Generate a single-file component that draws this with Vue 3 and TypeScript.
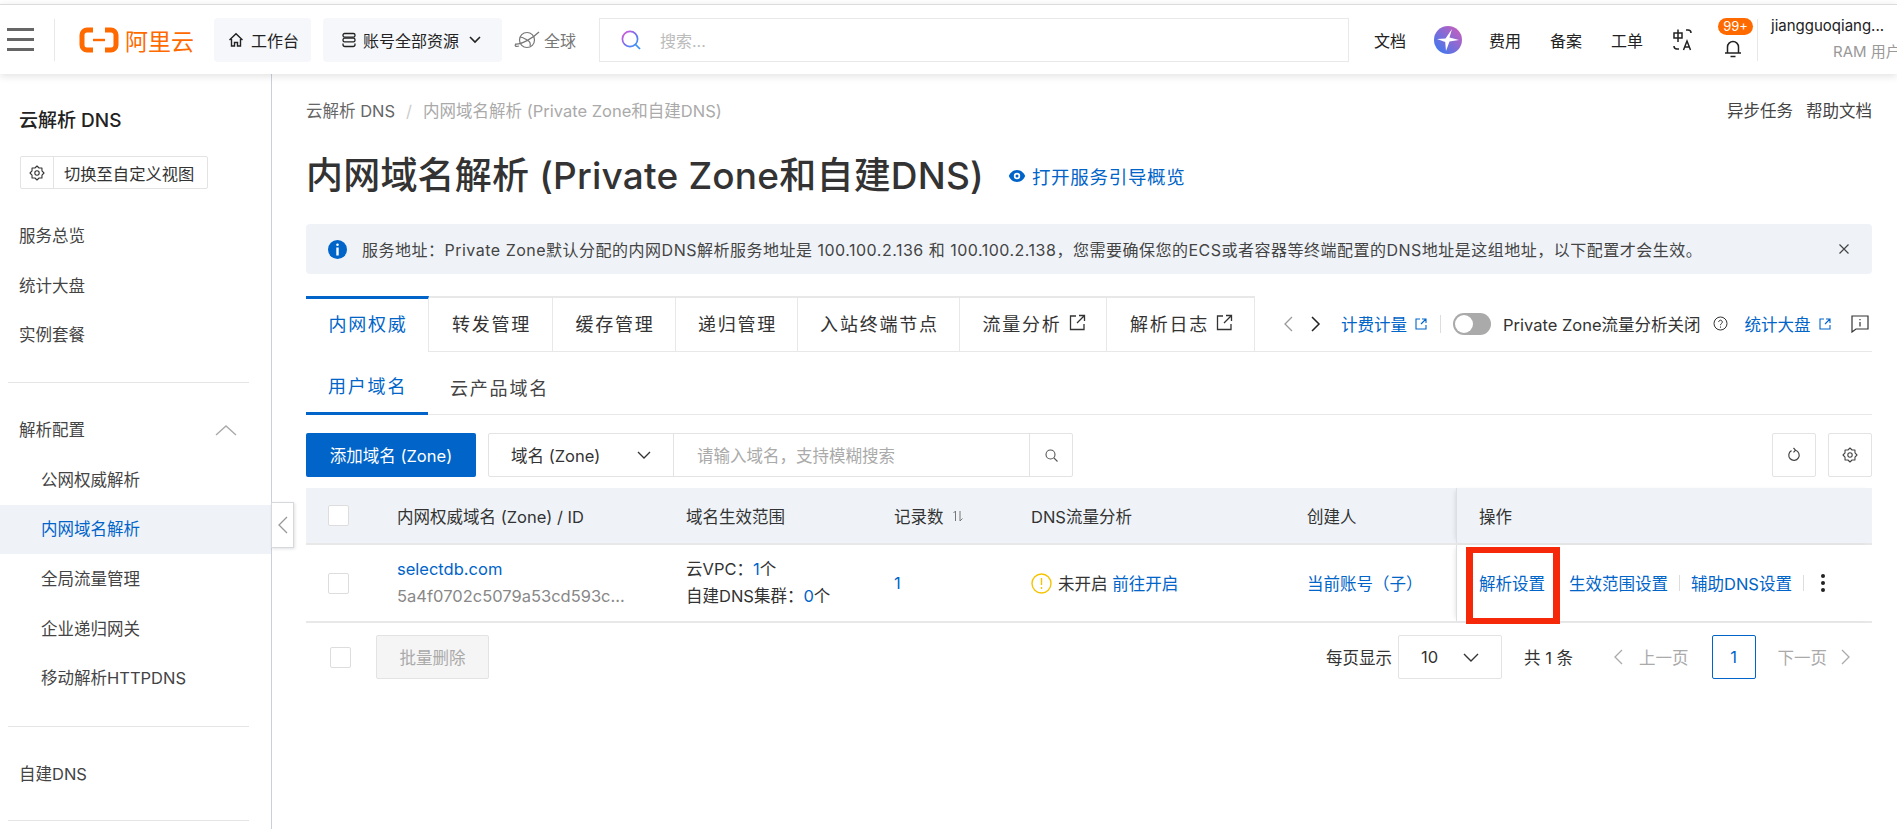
<script setup lang="ts">
interface TabItem {
  label: string
  width: number
  external?: boolean
}

const topLinks = ['费用', '备案', '工单']

const navTop = ['服务总览', '统计大盘', '实例套餐']
const navSub = ['公网权威解析', '内网域名解析', '全局流量管理', '企业递归网关', '移动解析HTTPDNS']

const tabs: TabItem[] = [
  { label: '内网权威', width: 123 },
  { label: '转发管理', width: 124 },
  { label: '缓存管理', width: 123 },
  { label: '递归管理', width: 122 },
  { label: '入站终端节点', width: 162 },
  { label: '流量分析', width: 147, external: true },
  { label: '解析日志', width: 148, external: true },
]

const columns = ['内网权威域名 (Zone) / ID', '域名生效范围', '记录数', 'DNS流量分析', '创建人']

// 8 tooth gear outline on a 16 box
function gearPath(): string {
  const pts: string[] = []
  const n = 8
  for (let i = 0; i < n * 2; i++) {
    const r = i % 2 === 0 ? 7 : 5.4
    const a = (Math.PI * i) / n
    pts.push(`${(8 + r * Math.sin(a)).toFixed(2)} ${(8 - r * Math.cos(a)).toFixed(2)}`)
  }
  return 'M' + pts.join('L') + 'Z'
}
const gear = gearPath()
</script>

<template>
  <div class="page">
    <header class="topbar">
      <div class="burger"><i></i><i></i><i></i></div>
      <div class="logo">
        <svg width="40" height="26" viewBox="0 0 40 26">
          <path d="M14 3H8a5 5 0 0 0-5 5v10a5 5 0 0 0 5 5h6M26 3h6a5 5 0 0 1 5 5v10a5 5 0 0 1-5 5h-6" fill="none" stroke="#ff6a00" stroke-width="5"/>
          <path d="M14 13h12" stroke="#ff6a00" stroke-width="2.4"/>
        </svg>
        <span>阿里云</span>
      </div>
      <div class="pill pill-home">
        <svg width="16" height="16" viewBox="0 0 16 16" fill="none" stroke="#222" stroke-width="1.4"><path d="M1.5 8 8 1.8 14.5 8M3.500 7v7h3v-3.500h3V14h3V7"/></svg>
        工作台
      </div>
      <div class="pill pill-res">
        <svg width="16" height="16" viewBox="0 0 16 16" fill="none" stroke="#222" stroke-width="1.3"><rect x="2" y="1.500" width="12" height="3.600" rx="1.600"/><rect x="2" y="6.200" width="12" height="3.600" rx="1.600"/><path d="M2 11.500v1a2 2 0 0 0 2 2h8a2 2 0 0 0 2-2v-1"/></svg>
        账号全部资源
        <svg class="res-arrow" width="12" height="8" viewBox="0 0 12 8" fill="none" stroke="#222" stroke-width="1.600"><path d="m1 1 5 5 5-5"/></svg>
      </div>
      <div class="region">
        <svg width="28" height="22" viewBox="0 0 28 22" fill="none" stroke="#777" stroke-width="1.200"><circle cx="14" cy="11" r="7.500"/><path d="M2 15c6 1 18-6 24-12M7 8c3 0 5 2 7 3s4 3 3 6M3 15c-2 2 0 3 3 2"/></svg>
        全球
      </div>
      <div class="search">
        <svg width="22" height="22" viewBox="0 0 22 22" fill="none" stroke-width="1.700">
          <defs>
            <linearGradient id="sg" x1="0" y1="0" x2="1" y2="1">
              <stop offset="0" stop-color="#e05ad0"/>
              <stop offset="0.5" stop-color="#7a6cf0"/>
              <stop offset="1" stop-color="#2f9bf5"/>
            </linearGradient>
          </defs>
          <circle cx="10" cy="10" r="7.600" stroke="url(#sg)"/>
          <path d="m15.500 15.500 4.500 4.500" stroke="#3a8ff5"/>
        </svg>
        <span>搜索...</span>
      </div>
      <a class="top-link first">文档</a>
      <div class="star">
        <svg width="28" height="28" viewBox="0 0 28 28">
          <defs>
            <linearGradient id="stg" x1="0" y1="1" x2="1" y2="0">
              <stop offset="0" stop-color="#2f7bf5"/>
              <stop offset="1" stop-color="#d45cb8"/>
            </linearGradient>
          </defs>
          <circle cx="14" cy="14" r="14" fill="url(#stg)"/>
          <path d="M18 3 15.500 11.500 25 14l-9.500 1.500L12 25l-.8-9L3 13l8.500-.5z" fill="#fff"/>
        </svg>
      </div>
      <a v-for="l in topLinks" :key="l" class="top-link">{{ l }}</a>
      <svg class="lang" width="22" height="24" viewBox="0 0 22 24" fill="none" stroke="#222" stroke-width="1.500">
        <path d="M2 5h8v5H2zM6 1.500V14M14 2h2a3 3 0 0 1 3 3M2 18a3 3 0 0 0 3 3h2"/>
        <path d="m11.500 22 3.500-9 3.500 9M12.800 19h4.400"/>
      </svg>
      <div class="bell">
        <svg width="20" height="20" viewBox="0 0 20 20" fill="none" stroke="#222" stroke-width="1.500"><path d="M2 15h16M4.500 15V9a5.500 5.500 0 0 1 11 0v6M7.500 18.500h5"/></svg>
        <span class="badge">99+</span>
      </div>
      <div class="user">
        <div class="user-name">jiangguoqiang...</div>
        <div class="user-role">RAM 用户</div>
      </div>
    </header>

    <div class="body">
      <aside class="side">
        <div class="side-title">云解析 DNS</div>
        <div class="view-btn">
          <span class="view-icon">
            <svg width="16" height="16" viewBox="0 0 16 16" fill="none" stroke="#333" stroke-width="1.100"><path :d="gear" stroke-linejoin="round"/><circle cx="8" cy="8" r="2.200"/></svg>
          </span>
          <span class="view-text">切换至自定义视图</span>
        </div>
        <div class="nav-group first">
          <div v-for="n in navTop" :key="n" class="nav-item">{{ n }}</div>
        </div>
        <div class="side-line"></div>
        <div class="nav-group">
          <div class="nav-item nav-head">
            解析配置
            <svg width="22" height="12" viewBox="0 0 22 12" fill="none" stroke="#aaa" stroke-width="1.400"><path d="m1 11 10-9 10 9"/></svg>
          </div>
          <div v-for="n in navSub" :key="n" class="nav-item nav-sub" :class="{ active: n === '内网域名解析' }">{{ n }}</div>
        </div>
        <div class="side-line low"></div>
        <div class="nav-group">
          <div class="nav-item">自建DNS</div>
        </div>
        <div class="side-line"></div>
        <div class="collapse">
          <svg width="10" height="18" viewBox="0 0 10 18" fill="none" stroke="#999" stroke-width="1.300"><path d="M9 1 1 9l8 8"/></svg>
        </div>
      </aside>

      <main class="main">
        <div class="crumb-row">
          <div class="crumbs">
            <span class="crumb-a">云解析 DNS</span>
            <span class="crumb-sep">/</span>
            <span class="crumb-b">内网域名解析 (Private Zone和自建DNS)</span>
          </div>
          <div class="crumb-right"><span>异步任务</span><span>帮助文档</span></div>
        </div>

        <div class="title-row">
          <h1>内网域名解析 (Private Zone和自建DNS)</h1>
          <a class="guide">
            <svg width="18" height="14" viewBox="0 0 18 14"><path d="M9 1C5 1 2 4 .8 7 2 10 5 13 9 13s7-3 8.200-6C16 4 13 1 9 1z" fill="#0064c8"/><circle cx="9" cy="7" r="3.200" fill="#fff"/><circle cx="9" cy="7" r="1.500" fill="#0064c8"/></svg>
            打开服务引导概览
          </a>
        </div>

        <div class="alert">
          <svg width="19" height="19" viewBox="0 0 19 19"><circle cx="9.500" cy="9.500" r="9.500" fill="#0064c8"/><rect x="8.200" y="3.500" width="2.600" height="2.600" rx="1.300" fill="#fff"/><rect x="8.300" y="7.500" width="2.400" height="8" fill="#fff"/></svg>
          <span class="alert-text">服务地址：Private Zone默认分配的内网DNS解析服务地址是 100.100.2.136 和 100.100.2.138，您需要确保您的ECS或者容器等终端配置的DNS地址是这组地址，以下配置才会生效。</span>
          <svg class="alert-x" width="12" height="12" viewBox="0 0 12 12" stroke="#444" stroke-width="1.200"><path d="m1.500 1.500 9 9M10.500 1.500l-9 9"/></svg>
        </div>

        <div class="tabbar">
          <div
            v-for="(t, i) in tabs"
            :key="t.label"
            class="tab"
            :class="{ on: i === 0 }"
            :style="{ width: t.width + 'px' }"
          >
            {{ t.label }}
            <svg v-if="t.external" width="17" height="17" viewBox="0 0 17 17" fill="none" stroke="#333" stroke-width="1.300"><path d="M7 2H1.500v13.500H15V10M10 1.500h5.500V7M15.500 1.500 8 9"/></svg>
          </div>
          <div class="tab-tools">
            <svg class="arrow" width="10" height="16" viewBox="0 0 10 16" fill="none" stroke="#999" stroke-width="1.300"><path d="M9 1 2 8l7 7"/></svg>
            <svg class="arrow next" width="10" height="16" viewBox="0 0 10 16" fill="none" stroke="#222" stroke-width="1.500"><path d="m1 1 7 7-7 7"/></svg>
            <a class="tool-link">计费计量
              <svg width="12" height="12" viewBox="0 0 12 12" fill="none" stroke="#0064c8" stroke-width="1.100"><path d="M5 1H1v10h10V7M7 1h4v4M11 1 6 6"/></svg>
            </a>
            <i class="tool-sep"></i>
            <span class="switch"><b></b></span>
            <span class="switch-text">Private Zone流量分析关闭</span>
            <svg class="help" width="15" height="15" viewBox="0 0 15 15" fill="none" stroke="#333" stroke-width="1"><circle cx="7.500" cy="7.500" r="6.500"/><path d="M5.700 6a1.800 1.800 0 1 1 2.800 1.500c-.7.500-1 .8-1 1.700M7.500 10.500v1.200"/></svg>
            <a class="tool-link stat">统计大盘
              <svg width="12" height="12" viewBox="0 0 12 12" fill="none" stroke="#0064c8" stroke-width="1.100"><path d="M5 1H1v10h10V7M7 1h4v4M11 1 6 6"/></svg>
            </a>
            <svg class="feedback" width="18" height="18" viewBox="0 0 18 18" fill="none" stroke="#333" stroke-width="1.200"><path d="M1 1h16v13H5l-4 3zM9 4v1.300M9 7v4.500"/></svg>
          </div>
        </div>

        <div class="subtabs">
          <div class="subtab on">用户域名</div>
          <div class="subtab">云产品域名</div>
        </div>

        <div class="toolbar">
          <button class="btn-add">添加域名 (Zone)</button>
          <div class="filter">
            <div class="filter-type">
              域名 (Zone)
              <svg width="14" height="8" viewBox="0 0 14 8" fill="none" stroke="#333" stroke-width="1.300"><path d="m1 1 6 6 6-6"/></svg>
            </div>
            <div class="filter-input">请输入域名，支持模糊搜索</div>
            <div class="filter-go">
              <svg width="13" height="13" viewBox="0 0 13 13" fill="none" stroke="#555" stroke-width="1.100"><circle cx="5.500" cy="5.500" r="4.500"/><path d="m9 9 3.500 3.500"/></svg>
            </div>
          </div>
          <div class="tool-btn push">
            <svg width="16" height="16" viewBox="0 0 16 16" fill="none" stroke="#444" stroke-width="1.200"><path d="M9.500 3.200A5.200 5.200 0 1 1 5.500 3.600M7.500 1l2 2.200-2 2.200"/></svg>
          </div>
          <div class="tool-btn">
            <svg width="16" height="16" viewBox="0 0 16 16" fill="none" stroke="#444" stroke-width="1.100"><path :d="gear" stroke-linejoin="round"/><circle cx="8" cy="8" r="2.200"/></svg>
          </div>
        </div>

        <div class="table">
          <div class="grid head">
            <div class="cell"><span class="check"></span></div>
            <div v-for="c in columns" :key="c" class="cell">
              {{ c }}
              <svg v-if="c === '记录数'" class="sort" width="12" height="12" viewBox="0 0 12 12" fill="none" stroke="#777" stroke-width="1"><path d="M3.500 11V1L1.500 3M8 1v10l2.500-2.500"/></svg>
            </div>
            <div class="cell ops-cell">操作</div>
          </div>
          <div class="grid row">
            <div class="cell"><span class="check"></span></div>
            <div class="cell stack">
              <a class="link">selectdb.com</a>
              <span class="zone-id">5a4f0702c5079a53cd593c...</span>
            </div>
            <div class="cell stack">
              <span>云VPC：<a class="link">1</a>个</span>
              <span>自建DNS集群：<a class="link">0</a>个</span>
            </div>
            <div class="cell"><a class="link">1</a></div>
            <div class="cell">
              <svg class="warn" width="21" height="21" viewBox="0 0 21 21" fill="none" stroke="#f5c400" stroke-width="1.400"><circle cx="10.500" cy="10.500" r="9.500"/><path d="M10.500 5v7M10.500 14v2"/></svg>
              未开启&nbsp;<a class="link">前往开启</a>
            </div>
            <div class="cell"><a class="link">当前账号（子）</a></div>
            <div class="cell ops-cell">
              <a class="link">解析设置</a>
              <a class="link op-2">生效范围设置</a>
              <i class="op-sep"></i>
              <a class="link">辅助DNS设置</a>
              <i class="op-sep"></i>
              <span class="dots"><i></i><i></i><i></i></span>
              <span class="red-box"></span>
            </div>
          </div>
        </div>

        <div class="footer">
          <span class="check"></span>
          <button class="btn-batch">批量删除</button>
          <span class="per">每页显示</span>
          <div class="size-select">
            10
            <svg width="16" height="9" viewBox="0 0 16 9" fill="none" stroke="#333" stroke-width="1.400"><path d="m1 1 7 7 7-7"/></svg>
          </div>
          <span class="total">共 1 条</span>
          <svg class="pg-arrow" width="10" height="16" viewBox="0 0 10 16" fill="none" stroke="#aaa" stroke-width="1.300"><path d="M9 1 2 8l7 7"/></svg>
          <span class="pg-off prev">上一页</span>
          <span class="pg-num">1</span>
          <span class="pg-off next">下一页</span>
          <svg class="pg-arrow end" width="10" height="16" viewBox="0 0 10 16" fill="none" stroke="#aaa" stroke-width="1.300"><path d="m1 1 7 7-7 7"/></svg>
        </div>
      </main>
    </div>
  </div>
</template>

<style scoped>
.page {
  height: 829px;
  overflow: hidden;
  display: flex;
  flex-direction: column;
  background: #fff;
  color: #333;
  font-family: Inter, "Noto Sans CJK SC", sans-serif;
  font-size: 16.500px;
  padding-top: 4px;
  box-sizing: border-box;
}
a { color: inherit; text-decoration: none; }

/* top bar */
.topbar {
  height: 69px;
  flex: none;
  display: flex;
  align-items: center;
  border-top: 1px solid #dcdcdc;
  box-shadow: 0 2px 8px rgba(0,0,0,0.12);
  position: relative;
  z-index: 2;
  background: #fff;
  white-space: nowrap;
  overflow: hidden;
}
.topbar > * { flex: none; }
.burger {
  width: 27px;
  margin-left: 7px;
  display: flex;
  flex-direction: column;
  gap: 7px;
}
.burger i { height: 3px; background: #666; }
.logo {
  margin-left: 20px;
  padding-left: 24px;
  box-sizing: border-box;
  height: 42px;
  border-left: 1px solid #e8e8e8;
  display: flex;
  align-items: center;
  gap: 6px;
  color: #ff6a00;
  font-size: 23px;
  width: 160px;
}
.pill {
  height: 44px;
  background: #f5f7fa;
  border-radius: 4px;
  display: flex;
  align-items: center;
  font-size: 16px;
  color: #222;
  box-sizing: border-box;
}
.pill-home { width: 97px; padding-left: 14px; gap: 7px; }
.pill-res { width: 179px; margin-left: 12px; padding-left: 18px; gap: 6px; }
.res-arrow { margin-left: 4px; }
.region {
  margin-left: 11px;
  width: 86px;
  display: flex;
  align-items: center;
  gap: 3px;
  color: #777;
  font-size: 16px;
}
.search {
  width: 750px;
  height: 44px;
  box-sizing: border-box;
  border: 1px solid #e9e9e9;
  display: flex;
  align-items: center;
  padding-left: 20px;
  gap: 18px;
  color: #bbb;
  font-size: 16px;
}
.top-link { font-size: 16px; color: #222; width: 32px; margin-right: 29px; }
.top-link.first { margin-left: 25px; margin-right: 28px; }
.star { width: 28px; height: 28px; margin-right: 27px; }
.bell { position: relative; width: 20px; height: 20px; margin-left: 29px; margin-top: 16px; }
.badge {
  position: absolute;
  left: -5px;
  top: -20px;
  width: 35px;
  height: 17px;
  line-height: 17px;
  text-align: center;
  border-radius: 9px;
  background: #ff6a00;
  color: #fff;
  font-size: 13px;
}
.user {
  margin-left: 14px;
  height: 42px;
  border-left: 1px solid #e8e8e8;
  padding-left: 13px;
  width: 140px;
}
.user-name { font-size: 15px; color: #222; line-height: 20px; margin-top: -3px; }
.user-role { font-size: 15px; color: #999; margin-top: 6px; padding-left: 62px; line-height: 20px; }

.body { flex: 1; display: flex; min-height: 0; }

/* sidebar */
.side {
  width: 272px;
  flex: none;
  box-sizing: border-box;
  border-right: 1px solid #c8d0da;
  position: relative;
  padding-top: 36px;
}
.side-title { font-size: 19px; font-weight: 500; color: #222; padding-left: 19px; line-height: 22px; }
.view-btn {
  margin: 24px 0 0 20px;
  width: 188px;
  height: 33px;
  box-sizing: border-box;
  border: 1px solid #e3e3e3;
  border-radius: 2px;
  display: flex;
  align-items: center;
  font-size: 16.300px;
}
.view-icon {
  width: 32px;
  height: 100%;
  border-right: 1px solid #e3e3e3;
  display: flex;
  align-items: center;
  justify-content: center;
}
.view-text { padding-left: 10px; }
.nav-group { display: flex; flex-direction: column; }
.nav-group.first { margin-top: 23px; }
.nav-item {
  height: 49.500px;
  line-height: 49.500px;
  padding-left: 19px;
  font-size: 16.500px;
  color: #444;
}
.nav-head { display: flex; align-items: center; justify-content: space-between; padding-right: 34px; }
.nav-sub { padding-left: 41px; position: relative; top: 1px; }
.nav-sub.active { background: #eff3f8; color: #0064c8; top: 0; }
.side-line { margin: 21px 22px 23px 8px; height: 1px; background: #e5e5e5; }
.side-line.low { margin-top: 23px; }
.collapse {
  position: absolute;
  left: 271px;
  top: 428px;
  width: 23px;
  height: 46px;
  box-sizing: border-box;
  background: #fff;
  border: 1px solid #d5d9de;
  box-shadow: 1px 1px 3px rgba(0,0,0,0.12);
  display: flex;
  align-items: center;
  justify-content: center;
}

/* main column */
.main { flex: 1; min-width: 0; padding: 0 25px 0 34px; }
.crumb-row {
  display: flex;
  justify-content: space-between;
  align-items: center;
  height: 20px;
  margin-top: 26px;
}
.crumb-a { color: #666; }
.crumb-sep { color: #ccc; margin: 0 11px; }
.crumb-b { color: #aaa; }
.crumb-right { display: flex; gap: 13px; color: #444; }
.title-row { display: flex; align-items: center; margin-top: 32px; height: 48px; }
h1 { margin: 0; font-size: 37px; letter-spacing: 0.2px; font-weight: 500; color: #333; line-height: 48px; }
.guide {
  margin-left: 24px;
  display: flex;
  align-items: center;
  gap: 6px;
  color: #0064c8;
  font-size: 18.500px;
  letter-spacing: 0.7px;
}
.alert {
  margin-top: 24px;
  height: 50px;
  background: #eff3f8;
  border-radius: 4px;
  display: flex;
  align-items: center;
  padding-left: 22px;
}
.alert-text { margin-left: 15px; font-size: 16px; letter-spacing: 0.5px; color: #444; white-space: nowrap; }
.alert-x { margin-left: auto; margin-right: 22px; }

.tabbar {
  margin-top: 22px;
  height: 55px;
  display: flex;
  border-bottom: 1px solid #e8e8e8;
}
.tab {
  flex: none;
  box-sizing: border-box;
  height: 55px;
  padding: 0 0 4px 2px;
  border-top: 2px solid #e8e8e8;
  border-right: 1px solid #e8e8e8;
  display: flex;
  align-items: center;
  justify-content: center;
  gap: 7px;
  font-size: 18px;
  color: #333;
  letter-spacing: 1.800px;
  background: #fff;
}
.tab.on { color: #0064c8; border-top: 3px solid #0064c8; height: 56px; padding-bottom: 5px; position: relative; }
.tab-tools {
  flex: 1;
  min-width: 0;
  display: flex;
  align-items: center;
  padding-left: 28px;
  white-space: nowrap;
}
.tab-tools > * { flex: none; }
.arrow.next { margin-left: 18px; }
.tool-link { color: #0064c8; display: flex; align-items: center; gap: 8px; margin-left: 20px; }
.tool-sep { width: 1px; height: 18px; background: #ddd; margin-left: 13px; }
.switch {
  width: 38px;
  height: 22px;
  border-radius: 11px;
  background: #aaa;
  margin-left: 12px;
  position: relative;
}
.switch b {
  position: absolute;
  left: 2px;
  top: 2px;
  width: 18px;
  height: 18px;
  border-radius: 50%;
  background: #fff;
}
.switch-text { margin-left: 12px; color: #333; }
.help { margin-left: 12px; }
.tool-link.stat { margin-left: 17px; }
.feedback { margin-left: auto; margin-right: 3px; }

.subtabs {
  height: 63px;
  display: flex;
  border-bottom: 1px solid #e8e8e8;
  box-sizing: border-box;
}
.subtab {
  font-size: 18px;
  letter-spacing: 1.800px;
  padding: 6px 22px 0;
  display: flex;
  align-items: center;
  color: #444;
  height: 63px;
  box-sizing: border-box;
  white-space: nowrap;
}
.subtab.on { color: #0064c8; border-bottom: 3px solid #0064c8; width: 122px; padding-right: 0; }

.toolbar { margin-top: 18px; display: flex; gap: 12px; height: 44px; }
.btn-add {
  width: 170px;
  border: none;
  background: #0064c8;
  border-radius: 2px;
  color: #fff;
  font: inherit;
}
.filter {
  display: flex;
  width: 585px;
  border: 1px solid #e3e3e3;
  border-radius: 2px;
  box-sizing: border-box;
}
.filter-type {
  width: 185px;
  flex: none;
  box-sizing: border-box;
  padding: 0 22px;
  display: flex;
  align-items: center;
  justify-content: space-between;
  border-right: 1px solid #e3e3e3;
}
.filter-input { flex: 1; display: flex; align-items: center; padding-left: 23px; color: #aaa; }
.filter-go { width: 42px; border-left: 1px solid #e3e3e3; display: flex; align-items: center; justify-content: center; }
.tool-btn {
  width: 44px;
  box-sizing: border-box;
  border: 1px solid #e3e3e3;
  border-radius: 2px;
  display: flex;
  align-items: center;
  justify-content: center;
}
.tool-btn.push { margin-left: auto; }

/* table */
.table { margin-top: 11px; }
.grid {
  display: grid;
  grid-template-columns: 91px 289px 208px 137px 276px 149px 1fr;
  align-items: stretch;
  border-bottom: 2px solid #e8e8e8;
}
.head { height: 57px; background: #eff3f8; box-sizing: border-box; }
.row { height: 78px; box-sizing: border-box; }
.cell { display: flex; align-items: center; color: #333; white-space: nowrap; }
.cell .check { margin-left: 22px; }
.check {
  width: 21px;
  height: 21px;
  box-sizing: border-box;
  background: #fff;
  border: 1px solid #ddd;
  border-radius: 2px;
  flex: none;
}
.stack { flex-direction: column; align-items: flex-start; justify-content: center; gap: 6px; line-height: 21px; }
.link { color: #0064c8; }
.zone-id { color: #888; }
.sort { margin-left: 8px; }
.warn { margin-right: 6px; }
.ops-cell {
  padding-left: 22px;
  border-left: 1px solid #dcdfe4;
  box-shadow: -3px 0 5px -3px rgba(0,0,0,0.14);
  position: relative;
}
.op-2 { margin-left: 24px; }
.op-sep { width: 1px; height: 16px; background: #ddd; margin: 0 11px; }
.dots { display: flex; flex-direction: column; gap: 3px; margin-left: 6px; }
.dots i { width: 4px; height: 4px; border-radius: 50%; background: #222; }
.red-box {
  position: absolute;
  left: 9px;
  top: 2px;
  width: 94px;
  height: 77px;
  box-sizing: border-box;
  border: 6px solid #f5290a;
  border-left-width: 7px;
  border-right-width: 7px;
}

.footer { margin-top: 12px; display: flex; align-items: center; height: 44px; padding-left: 24px; }
.btn-batch {
  margin-left: 25px;
  width: 113px;
  height: 44px;
  background: #f5f5f5;
  border: 1px solid #e3e3e3;
  border-radius: 2px;
  color: #aaa;
  font: inherit;
}
.per { margin-left: auto; }
.size-select {
  margin-left: 6px;
  width: 104px;
  height: 44px;
  box-sizing: border-box;
  border: 1px solid #e3e3e3;
  border-radius: 2px;
  display: flex;
  align-items: center;
  justify-content: space-between;
  padding: 0 22px;
}
.total { margin-left: 22px; }
.pg-arrow { margin-left: 40px; }
.pg-off { color: #aaa; }
.prev { margin-left: 16px; }
.pg-num {
  margin-left: 23px;
  width: 44px;
  height: 44px;
  box-sizing: border-box;
  border: 1px solid #0064c8;
  border-radius: 2px;
  color: #0064c8;
  display: flex;
  align-items: center;
  justify-content: center;
}
.next { margin-left: 22px; }
.pg-arrow.end { margin-left: 14px; margin-right: 21px; }
</style>

<style>
html, body { margin: 0; overflow: hidden; }
</style>
